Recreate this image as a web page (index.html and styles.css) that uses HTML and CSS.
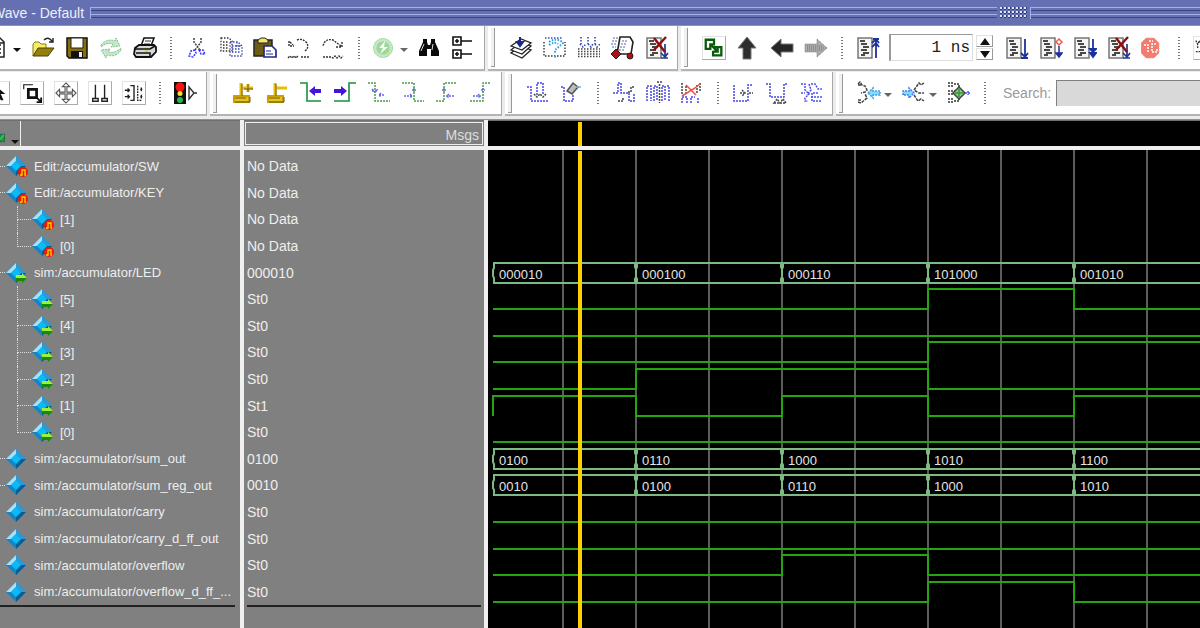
FILE: index.html
```html
<!DOCTYPE html>
<html lang="en">

<head>
    <meta charset="UTF-8">
    <meta name="viewport" content="width=device-width, initial-scale=1.0">
    <title>Wave - Default</title>
    <link rel="stylesheet" href="styles.css">
</head>

<body>
    <!-- shapes shared by several icons -->
    <svg class="defs" aria-hidden="true">
        <symbol id="page" viewBox="0 0 24 24">
            <path d="M2 2H16V22H2z" fill="#f4f4f4" stroke="#777" stroke-width="1.5" />
            <path d="M4 5H9M5 8H11M7 11H13M5 14H11M7 17H13M5 19H9" stroke="#111" stroke-width="1.6" />
        </symbol>
        <symbol id="gem" viewBox="0 0 24 24">
            <path d="M11 2L21 12L11 22L1 12z" fill="#1583c4" />
            <path d="M11 2L1 12L6 12L11 7z" fill="#a5e2f8" />
            <path d="M11 2L21 12H16L11 7z" fill="#2a9bd8" />
            <path d="M11 22L21 12H16L11 17z" fill="#0b5c92" />
            <path d="M11 7L16 12L11 17L6 12z" fill="#08bdf5" />
        </symbol>
        <symbol id="gem-edit" viewBox="0 0 24 24">
            <use href="#gem" />
            <circle cx="18" cy="18" r="5" fill="#f31605" />
            <path d="M15 21H17V16H20V21H21" fill="none" stroke="#ffd800" stroke-width="1.3" />
        </symbol>
        <symbol id="gem-out" viewBox="0 0 24 24">
            <use href="#gem" />
            <path d="M11 14H17V12L22 17L17 22V20H11z" fill="#188a08" />
            <path d="M11 14H17V12L22 17H11z" fill="#9ff03a" />
        </symbol>
    </svg>

    <header class="titlebar">
        <span class="title">Wave - Default</span>
        <span class="groove groove-long"></span>
        <span class="grip"></span>
        <span class="groove"></span>
    </header>

    <nav class="toolbars">
        <div class="toolrow">
            <div class="toolbar first">
                <button aria-label="New"><svg viewBox="0 0 24 24"><path d="M1 2H14L18 6V21H1zM13 2V7H18M4 9H15M4 13H15M4 17H15" fill="none" stroke="#222" stroke-width="1.5" /></svg></button>
                <button class="caret" aria-label="New menu"></button>
                <button aria-label="Open"><svg viewBox="0 0 24 24"><path d="M2 20V8L4 6H8L10 8H15V12" fill="#f5ee6a" stroke="#8a7a10" /><path d="M2 20L7 12H23L17 20z" fill="#94800a" stroke="#4c4205" /><path d="M13 4Q17 0 21 5M22 2V6H18" fill="none" stroke="#222" stroke-width="1.4" /></svg></button>
                <button aria-label="Save"><svg viewBox="0 0 24 24"><path d="M2 2H22V22H4L2 20z" fill="#857009" stroke="#111" stroke-width="1.5" /><path d="M6 2H18V12H6z" fill="#fff" stroke="#222" /><path d="M6 15H18V22H6z" fill="#111" /><path d="M14 16H17V21H14z" fill="#eee" /></svg></button>
                <button aria-label="Reload"><svg viewBox="0 0 24 24" fill="none" stroke="#7fc08b" stroke-dasharray="2 1"><path d="M2 9Q8 2 16 5L17 2L21 10L12 11L14 8Q8 6 2 11z" fill="#c5e6c9" /><path d="M22 14Q17 22 8 19L7 22L2 14L11 13L9 16Q15 18 22 12z" fill="#c5e6c9" /></svg></button>
                <button aria-label="Print"><svg viewBox="0 0 24 24"><path d="M8 10L11 2H21L18 10" fill="#fff" stroke="#111" stroke-width="1.5" /><path d="M12 5H18M11 8H17" stroke="#333" /><path d="M2 12L6 9H21L23 11V16L18 21H3L1 18z" fill="#d8d8d8" stroke="#111" stroke-width="1.8" /><path d="M2 13H17L22 10M3 17H17V20" fill="none" stroke="#111" stroke-width="1.5" /><path d="M12 15H15" stroke="#dcdc18" stroke-width="2" /></svg></button>
                <span class="sep"></span>
                <button aria-label="Cut"><svg viewBox="0 0 24 24" fill="none" stroke-width="1.5" stroke-dasharray="2 1"><path d="M9 2V6L15 14M16 2V6L10 14" stroke="#444" /><path d="M10 14L6 15L4 20L8 21L11 17zM14 14L18 14L20 18L16 18z" stroke="#3734ff" /></svg></button>
                <button aria-label="Copy"><svg viewBox="0 0 24 24" fill="none" stroke-width="1.3" stroke-dasharray="1.5 1.5"><path d="M2 2H10L13 5V15H2zM4 6H9M4 9H9M4 12H9" stroke="#333" /><path d="M11 6H19L23 10V20H11zM13 10H20M13 13H21M13 16H21M18 6V10H23" stroke="#3346b8" /></svg></button>
                <button aria-label="Paste"><svg viewBox="0 0 24 24"><path d="M1 4H19V20H1z" fill="#6e5c16" stroke="#222" stroke-width="1.5" /><path d="M5 7V4L8 2H12L15 4V7z" fill="#f3e66b" stroke="#222" /><path d="M11 10H19L23 14V21H11z" fill="#fff" stroke="#202a8a" stroke-width="1.7" /><path d="M13 15H18M13 18H20" stroke="#202a8a" /></svg></button>
                <button aria-label="Undo"><svg viewBox="0 0 24 24" fill="none" stroke="#333" stroke-width="1.4" stroke-dasharray="2 1"><path d="M2 5V10H7M3 6L6 9M10 4Q15 2 19 6Q23 11 18 15M1 22L3 20L5 22L7 20L9 22L11 20M14 21H22" /></svg></button>
                <button aria-label="Redo"><svg viewBox="0 0 24 24" fill="none" stroke="#333" stroke-width="1.4" stroke-dasharray="2 1"><path d="M21 6V11H15M20 10L12 4Q4 2 2 10M2 21H10L12 22L14 20L16 22L18 20L20 22L22 20" /></svg></button>
                <span class="sep"></span>
                <button aria-label="Add"><svg viewBox="0 0 24 24"><circle cx="10" cy="12" r="9.5" fill="#c2e8c2" stroke="#86c88c" stroke-dasharray="1.5 1" /><circle cx="10" cy="12" r="7" fill="#9fd6a0" stroke="#d8f2d6" stroke-dasharray="1 1" /><path d="M12 5L6 12H10L7 18L15 11H11z" fill="#f7fff5" /><path d="M14 17H16" stroke="#dfe04a" stroke-width="2" /></svg></button>
                <button class="caret soft" aria-label="Add menu"></button>
                <button aria-label="Find"><svg viewBox="0 0 24 24"><path d="M5 3H9V6L10 9H12L13 6V3H17V6L21 15V20H13V13H9V20H1V15L5 6z" fill="#0a0a0a" /><path d="M6 8L3 15M15 8L14 14" stroke="#ddd" /></svg></button>
                <button aria-label="Expand tree"><svg viewBox="0 0 24 24" fill="none" stroke="#111" stroke-width="1.6"><path d="M1 1H9V9H1zM9 5H20M1 14H9V22H1zM9 18H20M3 5H7M5 3V7M3 18H7M5 16V20" /></svg></button>
            </div>
            <div class="toolbar">
                <button aria-label="Compile"><svg viewBox="0 0 24 24"><path d="M2 17L13 22L22 14L12 10z" fill="#fff" stroke="#222" stroke-width="1.3" /><path d="M2 14L13 18L22 10L12 6z" fill="#fff" stroke="#222" stroke-width="1.3" /><path d="M2 10L13 14L22 7L12 3z" fill="#fff" stroke="#222" stroke-width="1.3" /><path d="M11 1V8M8 6L11 10L14 6z" stroke="#172a8c" stroke-width="2" fill="#172a8c" /></svg></button>
                <button aria-label="Compile out of date"><svg viewBox="0 0 24 24" fill="none" stroke-width="1.4" stroke-dasharray="1.5 1.5"><path d="M1 6V20H22V6" stroke="#333" /><path d="M2 2H20" stroke="#304bc0" /><path d="M6 6Q12 2 18 5L20 7L12 14V17M6 9Q12 5 15 8M12 20V22" stroke="#24a1e4" stroke-width="2" /></svg></button>
                <button aria-label="Compile all"><svg viewBox="0 0 24 24" fill="none" stroke-dasharray="1.5 1.5"><path d="M4 1V8M11 1V8M18 1V8M3 8L6 11L9 8M11 8L14 11L16 8M18 8L20 11L23 8" stroke="#2640a6" stroke-width="1.5" /><path d="M1 13H23M1 15.5H23M1 18H23M1 20.5H23" stroke="#444" stroke-width="1.5" /></svg></button>
                <button aria-label="Simulate"><svg viewBox="0 0 24 24"><path d="M9 1H19L22 6L20 18H6z" fill="#fff" stroke="#222" stroke-width="1.6" /><path d="M11 5H17M10 8H16M9 11H15M8 14H14M2 2H8M1 5H7M0 8H6M1 11H5" stroke="#526aa5" stroke-dasharray="2 1" /><path d="M5 13L10 18L5 23L0 18z" fill="#b10f16" stroke="#222" /><circle cx="19" cy="20" r="3" fill="#b10f16" stroke="#222" /></svg></button>
                <button aria-label="Stop simulation"><svg viewBox="0 0 24 24"><use href="#page" /><path d="M20 8V21M16 17L20 21L23 17M16 22H23" fill="none" stroke="#21379c" stroke-width="1.7" /><path d="M9 2L20 16M21 1L9 14" stroke="#8c1010" stroke-width="2.5" /></svg></button>
            </div>
            <div class="toolbar">
                <button aria-label="Environment"><svg class="framed" viewBox="0 0 24 24" fill="none" stroke="#075b0b" stroke-width="2.5"><path d="M3 3H12V8H8V13H3zM11 11H20V20H11V15M9 9L16 16M16 11V16H11" /></svg></button>
                <button aria-label="Up"><svg viewBox="0 0 24 24"><path d="M11 1L20 12H15V23H7V12H2z" fill="#2e2e2e" stroke="#777" /></svg></button>
                <button aria-label="Back"><svg viewBox="0 0 24 24"><path d="M1 12L11 3V8H23V16H11V21z" fill="#262626" stroke="#777" /></svg></button>
                <button aria-label="Forward"><svg viewBox="0 0 24 24"><path d="M23 12L13 3V8H1V16H13V21z" fill="#aaa" stroke="#777" stroke-dasharray="1 1" /><path d="M3 10H18M3 12H20M3 14H18" stroke="#777" stroke-dasharray="1 1" /></svg></button>
                <span class="sep"></span>
                <button aria-label="Restart"><svg viewBox="0 0 24 24"><use href="#page" /><path d="M20 3V22M17 3H23M16 7L20 3L23 7M16 11L20 7L23 11" fill="none" stroke="#1d319d" stroke-width="1.8" /></svg></button>
                <input class="runlength" type="text" value="1 ns" aria-label="Run length">
                <span class="spinner"><button class="up" aria-label="Increase"></button><button class="down" aria-label="Decrease"></button></span>
                <button aria-label="Run"><svg viewBox="0 0 24 24"><use href="#page" /><path d="M20 3V20M16 17L20 21L23 17M16 22H23" fill="none" stroke="#1d319d" stroke-width="1.8" /></svg></button>
                <button aria-label="Continue run"><svg viewBox="0 0 24 24"><use href="#page" /><path d="M20 10V20M17 17L20 21L23 17z" fill="#1d319d" stroke="#1d319d" stroke-width="1.5" /><path d="M20 3L23 6L20 9L17 6z" fill="#fff" stroke="#ee594b" stroke-width="1.5" /></svg></button>
                <button aria-label="Run all"><svg viewBox="0 0 24 24"><use href="#page" /><path d="M20 3V20M17 13H23L20 16zM17 17H23L20 21z" fill="#1d319d" stroke="#1d319d" stroke-width="1.8" /></svg></button>
                <button aria-label="Break"><svg viewBox="0 0 24 24"><use href="#page" /><path d="M20 8V21M16 17L20 21L23 17M16 22H23" fill="none" stroke="#21379c" stroke-width="1.7" /><path d="M9 2L20 16M21 1L9 14" stroke="#8c1010" stroke-width="2.5" /></svg></button>
                <button aria-label="Stop"><svg viewBox="0 0 24 24"><path d="M5 2H13L18 7V17L13 22H5L0 17V7z" fill="#f27c70" stroke="#f4a098" stroke-dasharray="1.5 1" /><path d="M3 9H7V16M15 8H11V16H16V12M8 5H12" fill="none" stroke="#fff" stroke-width="1.5" stroke-dasharray="2 1" /></svg></button>
                <span class="sep"></span>
                <button aria-label="Step"><svg class="framed" viewBox="0 0 24 24"><path d="M2 4L4 8L6 4L8 8M4 10V12M2 16H8" fill="none" stroke="#333" stroke-width="1.5" stroke-dasharray="2 1" /></svg></button>
            </div>
        </div>

        <div class="toolrow">
            <div class="toolbar first">
                <button aria-label="Select mode"><svg class="framed" viewBox="0 0 24 24"><path d="M8 3V17L12 14L15 20H18L15 13H20z" fill="#111" /></svg></button>
                <button aria-label="Zoom mode"><svg class="framed" viewBox="0 0 24 24" fill="none" stroke="#111"><path d="M3 8V3H13" stroke-width="1.2" /><path d="M8 8H17V17H8z" stroke-width="3" /><path d="M16 16L22 22M22 17V22H17" stroke-width="2" /></svg></button>
                <button aria-label="Pan mode"><svg class="framed" viewBox="0 0 24 24" fill="#fff" stroke="#555" stroke-width="1.2"><path d="M12 1L16 5H13V11H19V8L23 12L19 16V13H13V19H16L12 23L8 19H11V13H5V16L1 12L5 8V11H11V5H8z" /></svg></button>
                <button aria-label="Two cursor mode"><svg class="framed" viewBox="0 0 24 24" fill="none" stroke="#222" stroke-width="1.5"><path d="M7 3V18M17 3V18M4 18H10V21H4zM14 18H20V21H14z" /></svg></button>
                <button aria-label="Edit mode"><svg class="framed" viewBox="0 0 24 24" fill="none" stroke="#222" stroke-width="1.5"><path d="M8 4H12V20H8M2 9H7M2 16H7" /><path d="M16 4V20H20M19 8H22M19 16H22" stroke-dasharray="2 1" /><path d="M5 7L7 9L5 11M5 14L7 16L5 18M20 6V10M20 14V18" /></svg></button>
                <span class="sep"></span>
                <button aria-label="Stop drawing"><svg viewBox="0 0 24 24"><path d="M0 1H12V23H0z" fill="#111" /><circle cx="6" cy="6" r="4.5" fill="#fa1111" /><circle cx="6" cy="12.5" r="2.5" fill="#f4e32c" /><circle cx="6" cy="19" r="3" fill="#22b94a" /><path d="M15 6L20 12L15 18zM20 12H23" fill="#fff" stroke="#333" stroke-width="1.4" /></svg></button>
            </div>
            <div class="toolbar">
                <button aria-label="Insert cursor"><svg viewBox="0 0 24 24" fill="none"><path d="M10 2V15M12 7H22M17 3V11" stroke="#e8bd08" stroke-width="3" /><path d="M3 15H18V21H3z" fill="#e0c51c" stroke="#cf9e05" stroke-width="2" /><path d="M11 3V15M17 3V11M13 8H22M4 21H19V16M4 17H15" stroke="#6a5b13" /></svg></button>
                <button aria-label="Delete cursor"><svg viewBox="0 0 24 24" fill="none"><path d="M10 2V15M12 7H22" stroke="#e8bd08" stroke-width="3" /><path d="M3 15H18V21H3z" fill="#e0c51c" stroke="#cf9e05" stroke-width="2" /><path d="M11 3V15M4 21H19V16M4 17H15" stroke="#6a5b13" /></svg></button>
                <button aria-label="Previous transition"><svg viewBox="0 0 24 24" fill="none"><path d="M1 2H8V20H22" stroke="#17913b" stroke-width="1.6" /><path d="M10 10L16 5V8H22V12H16V15z" fill="#4417d8" /></svg></button>
                <button aria-label="Next transition"><svg viewBox="0 0 24 24" fill="none"><path d="M1 20H16V2H23" stroke="#17913b" stroke-width="1.6" /><path d="M14 10L8 5V8H1V12H8V15z" fill="#4417d8" /></svg></button>
                <button aria-label="Previous falling edge"><svg viewBox="0 0 24 24" fill="none" stroke-width="1.5" stroke-dasharray="2 1"><path d="M1 2H8V20H23" stroke="#489a50" /><path d="M5 8L8 11L11 8M5 10H11M12 14H18M14 12L12 14L14 16" stroke="#6969ea" /></svg></button>
                <button aria-label="Next falling edge"><svg viewBox="0 0 24 24" fill="none" stroke-width="1.5" stroke-dasharray="2 1"><path d="M1 2H13V20H23" stroke="#489a50" /><path d="M11 9H15M13 7V11M3 15H12M9 13L11 15L9 17" stroke="#6969ea" /></svg></button>
                <button aria-label="Previous rising edge"><svg viewBox="0 0 24 24" fill="none" stroke-width="1.5" stroke-dasharray="2 1"><path d="M1 20H9V2H21" stroke="#489a50" /><path d="M7 9H11M9 7V11M11 15H19M14 13L12 15L14 17" stroke="#6969ea" /></svg></button>
                <button aria-label="Next rising edge"><svg viewBox="0 0 24 24" fill="none" stroke-width="1.5" stroke-dasharray="2 1"><path d="M1 20H14V2H21" stroke="#489a50" /><path d="M12 9H16M14 7V11M4 15H12M9 13L11 15L9 17" stroke="#6969ea" /></svg></button>
            </div>
            <div class="toolbar">
                <button aria-label="Insert pulse"><svg viewBox="0 0 24 24" fill="none" stroke-width="1.5" stroke-dasharray="2 1"><path d="M1 6H5V20H22M11 14V2H17V14" stroke="#4545e5" /><path d="M8 13L11 16L14 13L17 16L20 13" stroke="#444" /></svg></button>
                <button aria-label="Delete edge"><svg viewBox="0 0 24 24" fill="none" stroke-width="1.5"><path d="M1 6H4V20H13V14" stroke="#4545e5" stroke-dasharray="2 1" /><path d="M7 10L13 2L18 6L12 13z" fill="#bbb" stroke="#555" /><path d="M16 6H22" stroke="#4ac6e8" stroke-dasharray="2 1" /></svg></button>
                <span class="sep"></span>
                <button aria-label="Invert"><svg viewBox="0 0 24 24" fill="none" stroke-width="1.5" stroke-dasharray="2 1"><path d="M1 12H6V2H9V12H17V20H22V13" stroke="#4545e5" /><path d="M6 20H11V16M16 11H19V6H22" stroke="#444" /></svg></button>
                <button aria-label="Mirror"><svg viewBox="0 0 24 24" fill="none" stroke-width="1.5" stroke-dasharray="2 1"><path d="M1 20V5H5V20M8 20V5H11V20M16 20V5H19V20M23 20V5H20" stroke="#4545e5" /><path d="M13.5 3V22M11 1H16" stroke="#444" /></svg></button>
                <button aria-label="Change value"><svg viewBox="0 0 24 24" fill="none" stroke-width="1.5"><path d="M2 2V14M6 5V13M17 4V12M20 2V10" stroke="#444" stroke-dasharray="2 1" /><path d="M2 22V16H7V22M11 22V16H15M18 22V16" stroke="#4545e5" stroke-dasharray="2 1" /><path d="M2 15L15 7L20 3M6 4L16 14" stroke="#ef5148" /></svg></button>
                <span class="sep"></span>
                <button aria-label="Stretch edge"><svg viewBox="0 0 24 24" fill="none" stroke-width="1.5" stroke-dasharray="2 1"><path d="M2 4V20H16V4H20" stroke="#4545e5" /><path d="M8 12H13M10 9L13 12L10 15M17 12H21" stroke="#444" /></svg></button>
                <button aria-label="Move edge"><svg viewBox="0 0 24 24" fill="none" stroke-width="1.5" stroke-dasharray="2 1"><path d="M0 3H4V16H18V3H21" stroke="#4545e5" /><path d="M8 22L11 18L14 22L17 18L20 22z" stroke="#444" /></svg></button>
                <button aria-label="Extend"><svg viewBox="0 0 24 24" fill="none" stroke-width="1.5" stroke-dasharray="2 1"><path d="M1 3H5V9L9 13L5 17V20H8M11 3H15L18 8H22M1 12H5M9 3L11 9L7 14M12 20V12H19M11 16H22M13 20H22" stroke="#5050ed" /></svg></button>
            </div>
            <div class="toolbar grow">
                <button aria-label="Contributing signals"><svg viewBox="0 0 24 24" fill="none" stroke-width="1.5"><path d="M1 3L3 1L5 4L8 5L10 9L8 11L4 12M1 21L4 22L10 17L8 13M1 4H5M1 19H5" stroke="#444" stroke-dasharray="3 1" /><path d="M11 12L16 7V10H23V14H16V17z" fill="#7ce0fb" stroke="#4f9ae4" stroke-dasharray="2 1" /></svg></button>
                <button class="caret soft" aria-label="Contributing menu"></button>
                <button aria-label="Driven signals"><svg viewBox="0 0 24 24" fill="none" stroke-width="1.5"><path d="M22 2L19 4L17 2L12 9L17 12H22M12 14L16 20L19 18L22 20" stroke="#444" stroke-dasharray="3 1" /><path d="M12 12L7 7V10H1V14H7V17z" fill="#7ce0fb" stroke="#4c7af0" stroke-dasharray="2 1" /></svg></button>
                <button class="caret soft" aria-label="Driven menu"></button>
                <button aria-label="Trace"><svg viewBox="0 0 24 24" fill="none" stroke-width="1.5"><path d="M1 2H6M1 5H6M1 10H8M1 13H8M1 18H6M1 21H6M7 3H12V6M7 20H12V17" stroke="#333" stroke-dasharray="2 1" /><path d="M12 6L18 12L12 18L6 12z" fill="#83d681" stroke="#444" /><path d="M8 12H16M12 8V16" stroke="#3e8f42" /><path d="M18 12H24M21 10V14" stroke="#5550ff" stroke-dasharray="2 1" /></svg></button>
                <span class="sep"></span>
                <label class="search-label" for="search">Search:</label>
                <input class="search" id="search" type="text" disabled>
            </div>
        </div>
    </nav>

    <main class="panes">
        <section class="pane names">
            <div class="head">
                <button class="filter" aria-label="Signal filter"><svg viewBox="0 0 8 12"><path d="M0 1H6V11H0z" fill="#1f9d2b" stroke="#0a6a4a" /><path d="M0 8L5 2" stroke="#4fbb74" stroke-width="2" /></svg><span class="tri"></span></button>
            </div>
            <ul class="rows" id="names"></ul>
        </section>
        <section class="pane values">
            <div class="head"><span class="msgs">Msgs</span></div>
            <ul class="rows" id="values"></ul>
        </section>
        <section class="pane wave">
            <div class="head"><span class="cursor"></span></div>
            <svg class="canvas" id="canvas"></svg>
        </section>
    </main>

    <script src="wave.js"></script>
</body>

</html>
```

FILE: styles.css
```css
* {
    box-sizing: border-box;
}

body,
html {
    margin: 0;
    padding: 0;
    height: 100%;
}

body {
    display: flex;
    flex-direction: column;
    overflow: hidden;
    background: #ececec;
    font-family: 'Liberation Sans', Arial, sans-serif;
    font-size: 14px;
}

button,
input {
    font: inherit;
    margin: 0;
    padding: 0;
    border: none;
    background: none;
}

.defs {
    position: absolute;
    width: 0;
    height: 0;
}

/* title bar */
.titlebar {
    display: flex;
    align-items: center;
    gap: 3px;
    height: 26px;
    flex: none;
    background: #6470b2;
    border-bottom: 1px solid #8d93b0;
}

.title {
    margin-left: -8px;
    padding-right: 3px;
    color: #eceefa;
    white-space: nowrap;
}

.groove {
    flex: 170;
    height: 12px;
    border: solid #a3b0ee;
    border-width: 0 0 0 1px;
    background: linear-gradient(#a3b0ee 0 1px, #6470b2 1px 3px, #3c4680 3px 4px, #6470b2 4px 7px, #a3b0ee 7px 8px, #6470b2 8px 10px, #3c4680 10px 11px, #6470b2 11px);
}

.groove-long {
    flex: 909;
}

.grip {
    width: 27px;
    height: 12px;
    background: radial-gradient(circle at 1px 1px, #dfe5ff 1px, #313c78 1px 2px, transparent 2px) 0 0 / 4px 4px;
}

/* toolbars */
.toolbars {
    flex: none;
    border-bottom: 1px solid #909090;
}

.toolrow {
    display: flex;
    gap: 3px;
    height: 46px;
    margin-left: -19px;
    padding-bottom: 1px;
    overflow: hidden;
}

.toolrow:last-child {
    height: 47px;
    padding-bottom: 3px;
}

.toolbar {
    display: flex;
    align-items: center;
    flex: none;
    padding: 0 3px 0 0;
    background: #fff;
    border-right: 1px solid #a8a8a8;
    border-bottom: 2px solid #b4b4b4;
}

.toolbar:not(.first)::before {
    content: "";
    width: 3px;
    height: 38px;
    margin: 0 9px 0 3px;
    background: #f0f0f0;
    border-right: 1px solid #999;
    border-bottom: 1px solid #999;
}

.toolbar.grow {
    flex: 1;
    padding-right: 0;
}

.toolbar button {
    display: flex;
    flex: none;
    align-items: center;
    justify-content: center;
    width: 34px;
    height: 34px;
}

.toolbar svg {
    width: 24px;
    height: 24px;
}

.toolbar .framed {
    border: 1px solid #e2e2e2;
    border-right-color: #aaa;
    border-bottom-color: #aaa;
}

.toolbar .caret {
    width: 12px;
    margin-left: -4px;
    margin-right: 3px;
    padding-top: 4px;
}

.caret::before,
.tri {
    content: "";
    border: 4px solid transparent;
    border-top-color: #111;
    border-bottom: none;
}

.caret.soft::before {
    border-top-color: #666;
}

.sep {
    width: 18px;
    height: 22px;
    background: repeating-linear-gradient(#777 0 1px, #fff 1px 3px) center / 2px 100% no-repeat;
}

.runlength {
    width: 84px;
    height: 27px;
    margin: 0 3px 0 4px;
    padding-right: 2px;
    border: 1px solid #ddd;
    border-top-color: #999;
    border-left: 2px solid #999;
    font-family: 'Liberation Mono', monospace;
    font-size: 16px;
    text-align: right;
    color: #222;
}

.spinner {
    display: flex;
    flex-direction: column;
    gap: 1px;
    margin-right: 7px;
}

.toolbar .spinner button {
    width: 17px;
    height: 12px;
    border: 1px solid #e2e2e2;
    border-right-color: #999;
    border-bottom-color: #999;
}

.spinner button::before {
    content: "";
    border: 5px solid transparent;
}

.spinner .up::before {
    border-top: none;
    border-bottom: 7px solid #111;
}

.spinner .down::before {
    border-bottom: none;
    border-top: 7px solid #111;
}

.search-label {
    margin: 0 5px 0 9px;
    color: #999;
}

.search {
    flex: 1;
    min-width: 0;
    height: 26px;
    background: #d9d9d9;
    border: solid #808080;
    border-width: 1px 0 0 1px;
}

/* panes */
.panes {
    display: flex;
    flex: 1;
    min-height: 0;
}

.pane {
    display: flex;
    flex-direction: column;
    background: #808080;
    color: #eee;
}

.names {
    width: 244px;
    border-right: 4px solid #f0f0f0;
}

.values {
    width: 244px;
    border-right: 4px solid #f0f0f0;
}

.wave {
    flex: 1;
    min-width: 0;
    background: #000;
}

.head {
    display: flex;
    flex: none;
    height: 30px;
    border-top: 1px solid #707070;
    border-bottom: 4px solid #eee;
}

.filter {
    display: flex;
    align-items: end;
    gap: 5px;
    width: 21px;
    padding-bottom: 2px;
    border-right: 1px solid #f0f0f0;
}

.filter svg {
    width: 6px;
    height: 12px;
    flex: none;
}

.msgs {
    flex: 1;
    margin: 1px;
    padding-right: 3px;
    border: 1px solid #eee;
    line-height: 25px;
    text-align: right;
    color: #ddd;
}

.rows {
    display: grid;
    grid-template-columns: minmax(0, 1fr);
    grid-template-rows: repeat(17, 1fr);
    flex: none;
    height: 457px;
    margin: 0;
    padding: 3px 0 0;
    list-style: none;
    border-bottom: 2px solid #222;
}

#names {
    margin-right: 5px;
    font-size: 13px;
}

#values {
    margin: 0 3px;
}

.rows li {
    display: flex;
    align-items: center;
    min-height: 0;
    white-space: nowrap;
}

.rows svg {
    width: 24px;
    height: 24px;
    flex: none;
}

.stub {
    width: 5px;
    border-bottom: 1px dotted #ddd;
}

.stub.none {
    border-color: transparent;
}

.label {
    margin-left: 5px;
}

.branch {
    display: flex;
    flex-direction: column;
    width: 14px;
    height: 100%;
    margin-left: 17px;
}

.branch::before,
.branch::after {
    content: "";
    flex: 1;
    border-left: 1px dotted #ddd;
}

.branch::before {
    border-bottom: 1px dotted #ddd;
}

.branch.last::after {
    border-color: transparent;
}

/* waveforms */
.wave .cursor {
    width: 4px;
    margin: 1px 0 0 90px;
    background: #ffd000;
}

.canvas {
    flex: 1;
    width: 100%;
    min-height: 0;
}

.gridline {
    stroke: #5c5c5c;
    stroke-width: 2;
}

.cursor-line {
    stroke: #ffd000;
    stroke-width: 4;
}

.signal {
    fill: none;
    stroke: #22a80c;
    stroke-width: 2;
}

.bus {
    fill: none;
    stroke: #7dba81;
    stroke-width: 2;
}

.canvas text {
    fill: #e4e4e4;
    font-size: 13px;
}
```

FILE: wave.js
```javascript
// bus rows carry one value per period, bits rows one level per period
const signals = [
    { name: 'Edit:/accumulator/SW', icon: 'gem-edit', value: 'No Data', stub: true },
    { name: 'Edit:/accumulator/KEY', icon: 'gem-edit', value: 'No Data', stub: true },
    { name: '[1]', icon: 'gem-edit', value: 'No Data', child: true },
    { name: '[0]', icon: 'gem-edit', value: 'No Data', child: true, last: true },
    { name: 'sim:/accumulator/LED', icon: 'gem-out', value: '000010', stub: true, bus: ['000010', '000100', '000110', '101000', '001010'] },
    { name: '[5]', icon: 'gem-out', value: 'St0', child: true, bits: '00010' },
    { name: '[4]', icon: 'gem-out', value: 'St0', child: true, bits: '00000' },
    { name: '[3]', icon: 'gem-out', value: 'St0', child: true, bits: '00011' },
    { name: '[2]', icon: 'gem-out', value: 'St0', child: true, bits: '01100' },
    { name: '[1]', icon: 'gem-out', value: 'St1', child: true, bits: '10101' },
    { name: '[0]', icon: 'gem-out', value: 'St0', child: true, last: true, bits: '00000' },
    { name: 'sim:/accumulator/sum_out', icon: 'gem', value: '0100', stub: true, bus: ['0100', '0110', '1000', '1010', '1100'] },
    { name: 'sim:/accumulator/sum_reg_out', icon: 'gem', value: '0010', stub: true, bus: ['0010', '0100', '0110', '1000', '1010'] },
    { name: 'sim:/accumulator/carry', icon: 'gem', value: 'St0', bits: '00000' },
    { name: 'sim:/accumulator/carry_d_ff_out', icon: 'gem', value: 'St0', bits: '00000' },
    { name: 'sim:/accumulator/overflow', icon: 'gem', value: 'St0', bits: '00100' },
    { name: 'sim:/accumulator/overflow_d_ff_...', icon: 'gem', value: 'St0', bits: '00010' }
];

const START = 5;
const FIRST_EDGE = 148;
const PERIOD = 146;
const CURSOR = 92;
const ROWS_TOP = 3;
const ROWS_HEIGHT = 452;
const END = 4000;

function edgeX(i) {
    return i === 0 ? START : FIRST_EDGE + (i - 1) * PERIOD;
}

function signalPath(bits, y) {
    const level = b => b === '1' ? y - 10 : y + 10;
    let d = bits[0] === '1' ? `M${START} ${y + 10}V${level('1')}` : `M${START} ${level('0')}`;
    for (let i = 1; i < bits.length; i++) {
        d += `H${edgeX(i)}V${level(bits[i])}`;
    }
    return `<path class="signal" d="${d}H${END}" />`;
}

function busPath(values, y) {
    const top = y - 10;
    let d = `M${END} ${top}H${START + 1}v5l-1 2v6l1 2v5H${END}`;
    for (let i = 1; i < values.length; i++) {
        const x = edgeX(i);
        d += `M${x - 1} ${top}v4l1 2v8l-1 2v4M${x + 1} ${top}v4l-1 2v8l1 2v4`;
    }
    let out = `<path class="bus" d="${d}" />`;
    values.forEach((v, i) => {
        out += `<text x="${edgeX(i) + 6}" y="${y + 6}">${v}</text>`;
    });
    return out;
}

function drawLists() {
    document.getElementById('names').innerHTML = signals.map(s => {
        const lead = s.child
            ? `<span class="branch${s.last ? ' last' : ''}"></span>`
            : `<span class="stub${s.stub ? '' : ' none'}"></span>`;
        return `<li>${lead}<svg viewBox="0 0 24 24"><use href="#${s.icon}" /></svg><span class="label">${s.name}</span></li>`;
    }).join('');
    document.getElementById('values').innerHTML = signals.map(s => `<li>${s.value}</li>`).join('');
}

function drawWaves() {
    let out = '';
    for (let x = FIRST_EDGE - PERIOD / 2; x < END; x += PERIOD / 2) {
        out += `<line class="gridline" x1="${x}" x2="${x}" y1="0" y2="100%" />`;
    }
    signals.forEach((s, i) => {
        const y = Math.round(ROWS_TOP + (i + 0.5) * ROWS_HEIGHT / signals.length);
        if (s.bus) out += busPath(s.bus, y);
        if (s.bits) out += signalPath(s.bits, y);
    });
    out += `<line class="cursor-line" x1="${CURSOR}" x2="${CURSOR}" y1="1" y2="100%" />`;
    document.getElementById('canvas').innerHTML = out;
}

drawLists();
drawWaves();
```
